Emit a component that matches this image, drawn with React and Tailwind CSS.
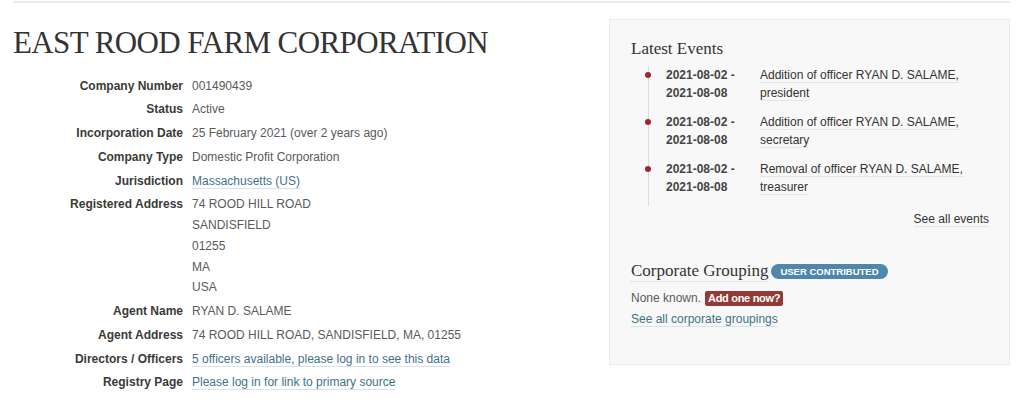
const rows = [
  { label: "Company Number", value: ["001490439"] },
  { label: "Status", value: ["Active"] },
  { label: "Incorporation Date", value: ["25 February 2021 (over 2 years ago)"] },
  { label: "Company Type", value: ["Domestic Profit Corporation"] },
  { label: "Jurisdiction", value: ["Massachusetts (US)"], link: true },
  { label: "Registered Address", value: ["74 ROOD HILL ROAD", "SANDISFIELD", "01255", "MA", "USA"] },
  { label: "Agent Name", value: ["RYAN D. SALAME"] },
  { label: "Agent Address", value: ["74 ROOD HILL ROAD, SANDISFIELD, MA, 01255"] },
  { label: "Directors / Officers", value: ["5 officers available, please log in to see this data"], link: true },
  { label: "Registry Page", value: ["Please log in for link to primary source"], link: true },
];

const events = [
  { text: "Addition of officer RYAN D. SALAME, president" },
  { text: "Addition of officer RYAN D. SALAME, secretary" },
  { text: "Removal of officer RYAN D. SALAME, treasurer" },
];

function Link({ children }) {
  return (
    <a href="#" className="text-[#41728a] border-b border-[#d5e3ea]">
      {children}
    </a>
  );
}

export default function App() {
  return (
    <div className="bg-white min-h-[412px] font-['Liberation_Sans',Arial,sans-serif] text-[12px]">
      <div className="mx-[13px] w-[997px] border-t-2 border-[#ececec] mt-px flex gap-[20px]">
        {/* Main details */}
        <div className="flex-1">
          <h1 className="mt-[23px] font-['Liberation_Serif',serif] text-[31px] leading-[34px] tracking-[-0.6px] text-[#333]">
            EAST ROOD FARM CORPORATION
          </h1>

          <dl className="mt-[14px]">
            {rows.map((row) => (
              <div key={row.label} className="flex py-[1.5px] leading-[20.75px]">
                <dt className="w-[170px] shrink-0 text-right font-bold text-[#3a3a3a]">{row.label}</dt>
                <dd className="ml-[9px] text-[#5a5a5a]">
                  {row.value.map((line) => (
                    <div key={line}>{row.link ? <Link>{line}</Link> : line}</div>
                  ))}
                </dd>
              </div>
            ))}
          </dl>
        </div>

        {/* Sidebar */}
        <aside className="w-[401px] shrink-0 mt-[16px] self-start bg-[#f8f8f8] border border-[#ebebeb] pl-[21px] pr-[20px] pt-[18px] pb-[35px]">
          <h3 className="font-['Liberation_Serif',serif] text-[17px] leading-[22px] text-[#333]">Latest Events</h3>

          <ul className="mt-[6px] ml-[17px] border-l border-[#dcdcdc] pl-[17px] pb-[10px]">
            {events.map((ev, i) => (
              <li key={i} className={`relative flex leading-[18px] ${i > 0 ? "mt-[11px]" : ""}`}>
                <span className="absolute left-[-21px] top-[6px] w-[6px] h-[6px] rounded-full bg-[#a3232e]" />
                <div className="w-[94px] shrink-0 font-bold text-[#444]">
                  <div>2021-08-02 -</div>
                  <div>2021-08-08</div>
                </div>
                <div className="flex-1 text-[#333]">
                  <a href="#" className="border-b border-[#dfe7ea]">{ev.text}</a>
                </div>
              </li>
            ))}
          </ul>

          <div className="mt-[4px] text-right leading-[18px] text-[#333]">
            <a href="#" className="border-b border-[#dfe7ea]">See all events</a>
          </div>

          <div className="mt-[32px] flex items-center leading-[22px]">
            <h3 className="font-['Liberation_Serif',serif] text-[17px] text-[#333] border-b border-dotted border-[#cfcfcf] leading-[21px]">
              Corporate Grouping
            </h3>
            <span className="ml-[3px] mt-[1px] rounded-full bg-[#4e86ac] px-[9px] text-[9.5px] leading-[15px] font-bold text-white">
              USER CONTRIBUTED
            </span>
          </div>

          <div className="mt-[6px] flex items-center leading-[20px] text-[#5a5a5a]">
            None known.
            <span className="ml-[4px] rounded-[2px] bg-[#923a35] px-[3px] text-[11px] leading-[15px] tracking-[-0.3px] font-bold text-white">
              Add one now?
            </span>
          </div>
          <div className="mt-px leading-[20px]">
            <Link>See all corporate groupings</Link>
          </div>
        </aside>
      </div>
    </div>
  );
}
